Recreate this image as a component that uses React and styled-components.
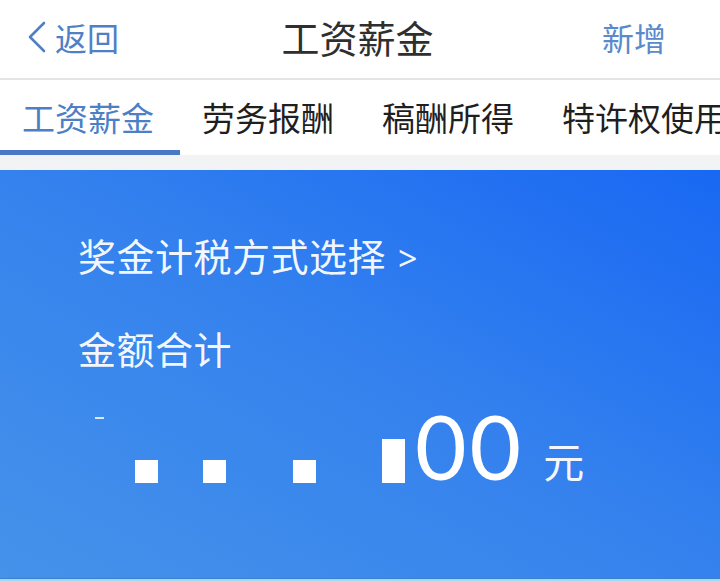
import React from "react";
import styled, { createGlobalStyle } from "styled-components";

const Global = createGlobalStyle`
  html, body { margin: 0; padding: 0; background: #ffffff; }
  body { font-family: "Noto Sans CJK SC", "Noto Sans", sans-serif; }
  * { box-sizing: border-box; }
`;

const Page = styled.div`
  width: 720px;
  height: 581px;
  overflow: hidden;
  display: flex;
  flex-direction: column;
  background: #f3f4f6;
`;

const Header = styled.div`
  height: 80px;
  flex: 0 0 80px;
  display: flex;
  align-items: center;
  justify-content: space-between;
  background: #ffffff;
  border-bottom: 2px solid #e4e4e6;
  padding: 0 54px 4px 27px;
`;

const Back = styled.div`
  display: flex;
  align-items: center;
  gap: 8px;
  width: 140px;
  color: #4f80c4;
  font-size: 32px;
  line-height: 1;
`;

const Title = styled.div`
  font-size: 38px;
  color: #2f2f2f;
  line-height: 1;
  margin-left: 22px;
`;

const Action = styled.div`
  width: 140px;
  text-align: right;
  font-size: 32px;
  line-height: 1;
  color: #5a8acb;
`;

const Tabs = styled.div`
  height: 75px;
  flex: 0 0 75px;
  display: flex;
  background: #ffffff;
  white-space: nowrap;
  overflow: hidden;
`;

const Tab = styled.div`
  position: relative;
  flex: 0 0 auto;
  padding: 0 26px 0 22px;
  display: flex;
  align-items: center;
  font-size: 33px;
  line-height: 1;
  color: ${(p) => (p.$active ? "#4d7fc6" : "#1f1f1f")};
  &::after {
    content: "";
    display: ${(p) => (p.$active ? "block" : "none")};
    position: absolute;
    left: 0;
    right: 0;
    bottom: 0;
    height: 5px;
    background: #4b78c6;
  }
`;

const Gap = styled.div`
  height: 15px;
  flex: 0 0 15px;
  background: #f2f3f5;
`;

const Panel = styled.div`
  flex: 0 0 409px;
  height: 409px;
  background: linear-gradient(to top right, #4592ea 0%, #3582ee 50%, #1968f3 100%);
  border-bottom: 1px solid #3f7fd0;
  padding: 66px 0 0 78px;
  color: rgba(255, 255, 255, 0.96);
  display: flex;
  flex-direction: column;
`;

const Line = styled.div`
  font-size: 38px;
  line-height: 38px;
  margin-bottom: ${(p) => p.$mb || 0}px;
  letter-spacing: 0.5px;
`;

const Arrow = styled.span`
  font-family: "Noto Sans", sans-serif;
  margin-left: 12px;
  font-size: 34px;
`;

const Amount = styled.div`
  position: relative;
  display: flex;
  align-items: flex-end;
  height: 80px;
`;

const Tick = styled.span`
  position: absolute;
  left: 17px;
  top: 12px;
  width: 9px;
  height: 2px;
  background: rgba(255, 255, 255, 0.8);
`;

const Block = styled.span`
  display: block;
  width: ${(p) => p.$w}px;
  height: ${(p) => p.$h}px;
  margin-left: ${(p) => p.$ml}px;
  margin-bottom: 2px;
  background: #ffffff;
`;

const Digits = styled.span`
  font-family: Lato, "Noto Sans", sans-serif;
  font-weight: 400;
  font-size: 89px;
  line-height: 80px;
  letter-spacing: 3px;
  margin-left: 10px;
  margin-bottom: -1px;
  color: #ffffff;
`;

const Unit = styled.span`
  font-size: 41px;
  line-height: 1;
  margin-left: 19px;
  margin-bottom: 4px;
`;

const Foot = styled.div`
  flex: 1;
  background: #9fdcf2;
`;

const Chevron = () => (
  <svg width="20" height="32" viewBox="0 0 20 32">
    <polyline
      points="17,2 3,16 17,30"
      fill="none"
      stroke="#4f80c4"
      strokeWidth="2.6"
      strokeLinecap="round"
      strokeLinejoin="round"
    />
  </svg>
);

export default function App() {
  const tabs = ["工资薪金", "劳务报酬", "稿酬所得", "特许权使用费"];
  return (
    <>
      <Global />
      <Page>
        <Header>
          <Back>
            <Chevron />
            <span>返回</span>
          </Back>
          <Title>工资薪金</Title>
          <Action>新增</Action>
        </Header>
        <Tabs>
          {tabs.map((t, i) => (
            <Tab key={t} $active={i === 0}>
              {t}
            </Tab>
          ))}
        </Tabs>
        <Gap />
        <Panel>
          <Line $mb={52}>
            奖金计税方式选择<Arrow>&gt;</Arrow>
          </Line>
          <Line $mb={38}>金额合计</Line>
          <Amount>
            <Tick />
            <Block $w={23} $h={23} $ml={57} />
            <Block $w={23} $h={23} $ml={45} />
            <Block $w={23} $h={23} $ml={67} />
            <Block $w={23} $h={44} $ml={66} />
            <Digits>00</Digits>
            <Unit>元</Unit>
          </Amount>
        </Panel>
        <Foot />
      </Page>
    </>
  );
}
